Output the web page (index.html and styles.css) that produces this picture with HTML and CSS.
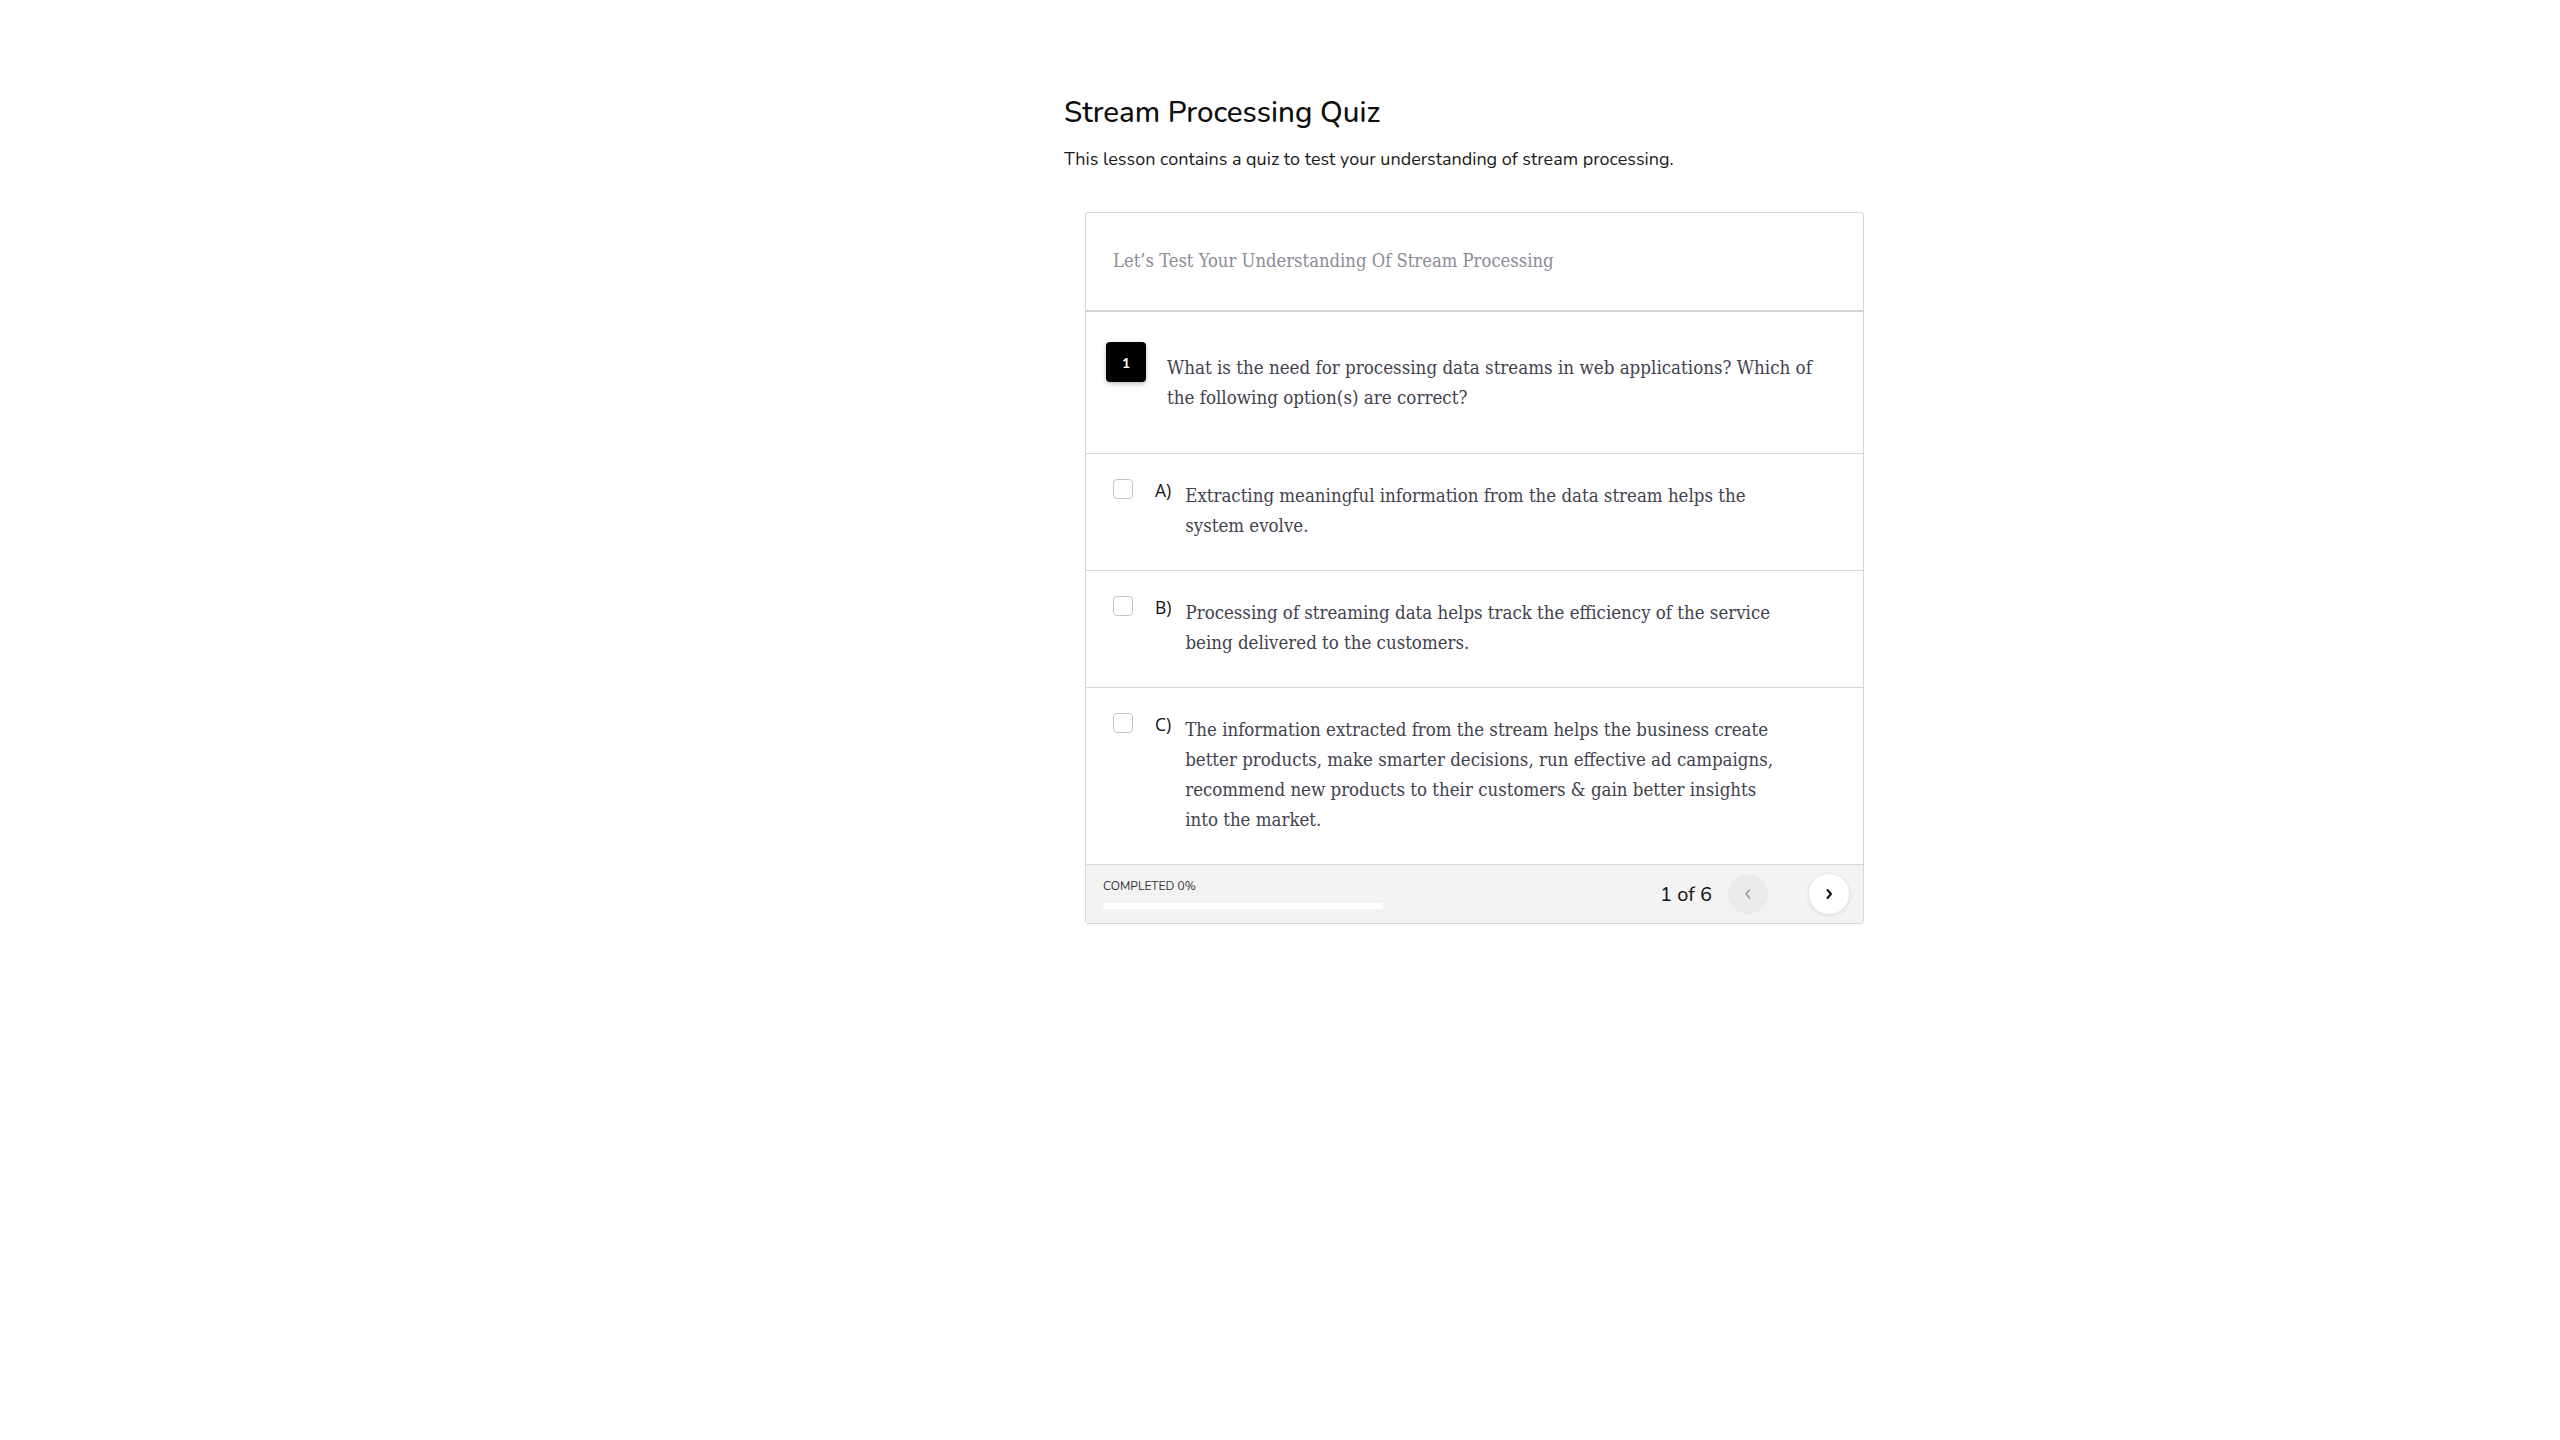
FILE: index.html
```html
<!DOCTYPE html>
<html lang="en">
<head>
<meta charset="utf-8">
<title>Stream Processing Quiz</title>
<link rel="stylesheet" href="styles.css">
</head>
<body>
<main class="page">
  <section class="lesson">
    <h1 class="lesson-title">Stream Processing Quiz</h1>
    <p class="lesson-desc">This lesson contains a quiz to test your understanding of stream processing.</p>

    <div class="quiz">
      <div class="quiz-header">Let’s Test Your Understanding Of Stream Processing</div>

      <div class="question">
        <div class="q-num">1</div>
        <div class="q-text">What is the need for processing data streams in web applications? Which of the following option(s) are correct?</div>
      </div>

      <div class="option">
        <span class="checkbox"></span>
        <span class="opt-label">A)</span>
        <span class="opt-text">Extracting meaningful information from the data stream helps the system evolve.</span>
      </div>
      <div class="option">
        <span class="checkbox"></span>
        <span class="opt-label">B)</span>
        <span class="opt-text">Processing of streaming data helps track the efficiency of the service being delivered to the customers.</span>
      </div>
      <div class="option">
        <span class="checkbox"></span>
        <span class="opt-label">C)</span>
        <span class="opt-text">The information extracted from the stream helps the business create better products, make smarter decisions, run effective ad campaigns, recommend new products to their customers &amp; gain better insights into the market.</span>
      </div>

      <div class="quiz-footer">
        <div class="progress">
          <div class="progress-label">COMPLETED 0%</div>
          <div class="progress-track"></div>
        </div>
        <div class="pager">
          <span class="pager-count">1 of 6</span>
          <button class="nav-btn prev" aria-label="Previous">
            <svg width="16" height="16" viewBox="0 0 16 16"><path d="M9.5 4 L6 8 L9.5 12" fill="none" stroke="#9a9aa0" stroke-width="1.5" stroke-linecap="round" stroke-linejoin="round"/></svg>
          </button>
          <button class="nav-btn next" aria-label="Next">
            <svg width="16" height="16" viewBox="0 0 16 16"><path d="M6.5 4 L10 8 L6.5 12" fill="none" stroke="#111" stroke-width="2" stroke-linecap="round" stroke-linejoin="round"/></svg>
          </button>
        </div>
      </div>
    </div>
  </section>
</main>
</body>
</html>
```

FILE: styles.css
```css
* { box-sizing: border-box; }

html, body {
  margin: 0;
  padding: 0;
  background: #ffffff;
}

.page {
  padding: 92px 0 0 1064px;
}

.lesson {
  width: 822px;
}

.lesson-title {
  margin: 0;
  font-family: "Nunito", "Lato", "Open Sans", sans-serif;
  font-weight: 500;
  font-size: 29.5px;
  line-height: 40px;
  color: #0d0d0d;
}

.lesson-desc {
  margin: 14px 0 0;
  font-family: "Nunito", "Lato", "Open Sans", sans-serif;
  font-size: 18px;
  line-height: 26px;
  color: #1a1a1a;
}

.quiz {
  margin: 40px 22px 0 21px;
  border: 1px solid #d8d8dc;
  border-radius: 3px;
  font-family: "DejaVu Serif Condensed", "DejaVu Serif", serif;
}

.quiz-header {
  padding: 35px 27px 36px;
  font-size: 18.3px;
  line-height: 26px;
  color: #8b8b96;
  border-bottom: 2px solid #d3d3d8;
}

.question {
  display: flex;
  align-items: flex-start;
  padding: 30px 28px 40px 20px;
  border-bottom: 1px solid #d8d8dc;
}

.q-num {
  flex: none;
  width: 40px;
  height: 40px;
  border-radius: 4px;
  background: #000;
  color: #fff;
  font-family: "Lato", "Open Sans", sans-serif;
  font-weight: 700;
  font-size: 14px;
  display: flex;
  align-items: center;
  justify-content: center;
  box-shadow: 0 2px 5px rgba(0, 0, 0, 0.25);
}

.q-text {
  margin: 11px 0 0 21px;
  font-size: 18.6px;
  line-height: 30px;
  color: #42424e;
}

.option {
  display: flex;
  align-items: flex-start;
  padding: 25px 80px 29px 27px;
  border-bottom: 1px solid #d8d8dc;
}

.checkbox {
  flex: none;
  width: 20px;
  height: 20px;
  border: 1px solid #c4c4c8;
  border-radius: 4px;
  background: #fff;
}

.opt-label {
  flex: none;
  margin: 0 0 0 22px;
  font-family: "Open Sans", "Lato", sans-serif;
  font-size: 17.5px;
  line-height: 22px;
  color: #111;
}

.opt-text {
  margin: 2px 0 0 14px;
  font-size: 18.5px;
  line-height: 30px;
  color: #42424e;
}

.quiz-footer {
  display: flex;
  align-items: center;
  justify-content: space-between;
  height: 58px;
  padding: 0 14px 0 17px;
  background: #f3f3f3;
}

.progress {
  display: flex;
  flex-direction: column;
  gap: 10px;
}

.progress-label {
  font-family: "Nunito", "Lato", "Open Sans", sans-serif;
  font-size: 12px;
  line-height: 14px;
  color: #333;
}

.progress-track {
  width: 280px;
  height: 6px;
  border-radius: 3px;
  background: #ffffff;
}

.pager {
  display: flex;
  align-items: center;
}

.pager-count {
  font-family: "Nunito", "Lato", "Open Sans", sans-serif;
  font-size: 20px;
  color: #111;
  margin-right: 16px;
}

.nav-btn {
  width: 40px;
  height: 40px;
  border: none;
  border-radius: 50%;
  padding: 0;
  display: flex;
  align-items: center;
  justify-content: center;
  cursor: pointer;
}

.nav-btn.prev {
  background: #ebebeb;
}

.nav-btn.next {
  margin-left: 41px;
  background: #fff;
  box-shadow: 0 1px 4px rgba(0, 0, 0, 0.12);
}
```
